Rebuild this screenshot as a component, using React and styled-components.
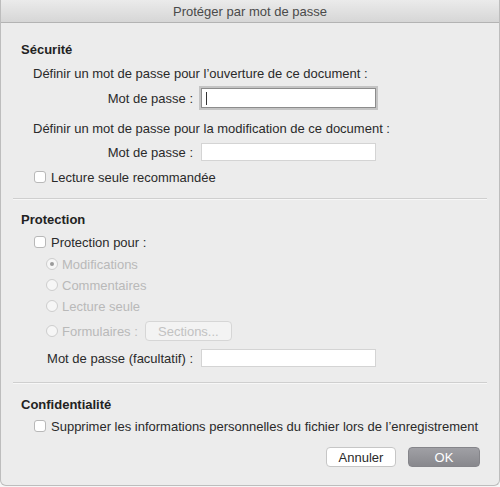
import React from 'react';
import styled, { createGlobalStyle } from 'styled-components';

const GlobalStyle = createGlobalStyle`
  html, body {
    margin: 0;
    padding: 0;
    background: #f6f6f6;
  }
  body {
    font-family: 'Liberation Sans', Arial, sans-serif;
    font-size: 13px;
    color: #2a2a2a;
  }
`;

const Window = styled.div`
  width: 500px;
  height: 486px;
  box-sizing: border-box;
  border: 1px solid #bdbdbd;
  border-top: none;
  border-radius: 0 0 6px 6px;
  background: #ececec;
  display: flex;
  flex-direction: column;
  overflow: hidden;
`;

const TitleBar = styled.div`
  height: 22px;
  flex-shrink: 0;
  display: flex;
  align-items: center;
  justify-content: center;
  background: linear-gradient(#ebebeb, #d6d6d6);
  border-bottom: 1px solid #b3b3b3;
  font-size: 13px;
  color: #4a4a4a;
`;

const Body = styled.div`
  padding: 0 12px 0 20px;
  display: flex;
  flex-direction: column;
`;

const Section = styled.section`
  display: flex;
  flex-direction: column;
  padding-top: ${p => p.$top}px;
  padding-bottom: ${p => p.$bottom}px;
`;

const Separator = styled.div`
  height: 1px;
  margin-left: -8px;
  background: #cfcfcf;
  border-bottom: 1px solid #f7f7f7;
`;

const Heading = styled.div`
  height: 16px;
  line-height: 16px;
  font-weight: bold;
  color: #222;
`;

const Row = styled.div`
  display: flex;
  align-items: center;
  white-space: nowrap;
  height: ${p => p.$h || 16}px;
  margin-top: ${p => p.$mt || 0}px;
  padding-left: ${p => p.$indent || 0}px;
  color: ${p => (p.$disabled ? '#b9b9b9' : '#2a2a2a')};
`;

const Label = styled.span`
  width: 172px;
  padding-right: 8px;
  text-align: right;
  flex-shrink: 0;
`;

const Input = styled.div`
  width: 175px;
  height: ${p => p.$h || 18}px;
  box-sizing: border-box;
  background: #fff;
  border: 1px solid ${p => (p.$focused ? '#8c8c8c' : '#d4d4d4')};
  box-shadow: ${p => (p.$focused ? '0 0 0 2px #c4c4c4' : 'none')};
  display: flex;
  align-items: center;
  padding-left: 4px;
`;

const Caret = styled.span`
  width: 1px;
  height: 13px;
  background: #333;
`;

const Check = styled.span`
  width: 12px;
  height: 12px;
  box-sizing: border-box;
  border: 1px solid #b8b8b8;
  border-radius: 3px;
  background: #fff;
  margin-right: 5px;
  flex-shrink: 0;
`;

const Radio = styled.span`
  width: 12px;
  height: 12px;
  box-sizing: border-box;
  border: 1px solid #cdcdcd;
  border-radius: 50%;
  background: #f6f6f6;
  margin-right: 4px;
  flex-shrink: 0;
  display: flex;
  align-items: center;
  justify-content: center;
  &::after {
    content: '';
    display: ${p => (p.$on ? 'block' : 'none')};
    width: 4px;
    height: 4px;
    border-radius: 50%;
    background: #9a9a9a;
  }
`;

const GhostButton = styled.span`
  margin-left: 7px;
  width: 87px;
  height: 20px;
  box-sizing: border-box;
  border: 1px solid #d6d6d6;
  border-radius: 4px;
  background: #f3f3f3;
  color: #c2c2c2;
  display: flex;
  align-items: center;
  justify-content: center;
`;

const Footer = styled.div`
  display: flex;
  justify-content: flex-end;
  gap: 12px;
  margin-top: 13px;
  padding-right: 7px;
`;

const Button = styled.button`
  width: ${p => p.$w}px;
  height: 20px;
  border-radius: 4px;
  font-family: inherit;
  font-size: 13px;
  padding: 0;
  border: 1px solid ${p => (p.$primary ? '#85858a' : '#c6c6c6')};
  background: ${p => (p.$primary ? 'linear-gradient(#a0a0a5, #88888d)' : '#fff')};
  color: ${p => (p.$primary ? '#fff' : '#2a2a2a')};
`;

const CheckRow = ({ children, mt, disabled }) => (
  <Row $indent={13} $mt={mt} $disabled={disabled}>
    <Check />
    {children}
  </Row>
);

const RadioRow = ({ children, mt, on, h }) => (
  <Row $indent={25} $mt={mt} $h={h} $disabled>
    <Radio $on={on} />
    {children}
  </Row>
);

export default function App() {
  return (
    <>
      <GlobalStyle />
      <Window>
        <TitleBar>Protéger par mot de passe</TitleBar>
        <Body>
          <Section $top={19} $bottom={13}>
            <Heading>Sécurité</Heading>
            <Row $indent={12} $mt={7}>Définir un mot de passe pour l’ouverture de ce document :</Row>
            <Row $h={22} $mt={6}>
              <Label>Mot de passe :</Label>
              <Input $focused $h={20}><Caret /></Input>
            </Row>
            <Row $indent={12} $mt={11}>Définir un mot de passe pour la modification de ce document :</Row>
            <Row $h={20} $mt={6}>
              <Label>Mot de passe :</Label>
              <Input />
            </Row>
            <CheckRow mt={7}>Lecture seule recommandée</CheckRow>
          </Section>
          <Separator />
          <Section $top={12} $bottom={14}>
            <Heading>Protection</Heading>
            <CheckRow mt={6}>Protection pour :</CheckRow>
            <RadioRow mt={6} on>Modifications</RadioRow>
            <RadioRow mt={5}>Commentaires</RadioRow>
            <RadioRow mt={5}>Lecture seule</RadioRow>
            <RadioRow mt={6} h={22}>
              Formulaires :
              <GhostButton>Sections...</GhostButton>
            </RadioRow>
            <Row $h={20} $mt={6}>
              <Label>Mot de passe (facultatif) :</Label>
              <Input />
            </Row>
          </Section>
          <Separator />
          <Section $top={13} $bottom={0}>
            <Heading>Confidentialité</Heading>
            <CheckRow mt={5}>Supprimer les informations personnelles du fichier lors de l’enregistrement</CheckRow>
            <Footer>
              <Button $w={70}>Annuler</Button>
              <Button $w={72} $primary>OK</Button>
            </Footer>
          </Section>
        </Body>
      </Window>
    </>
  );
}
